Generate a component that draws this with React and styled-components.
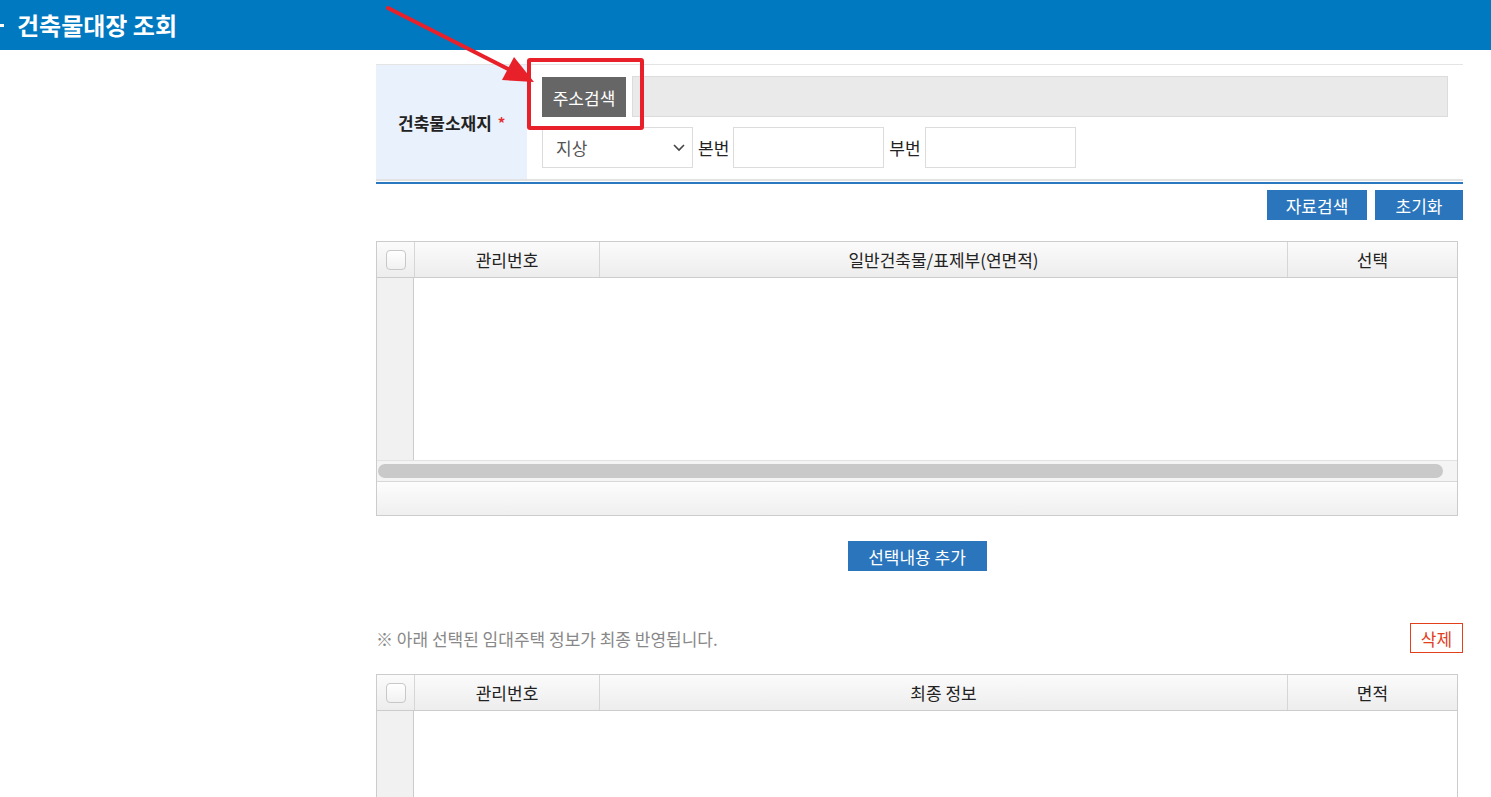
import React from "react";
import styled, { createGlobalStyle } from "styled-components";

const GlobalStyle = createGlobalStyle`
  body {
    margin: 0;
    background: #fff;
    font-family: "Noto Sans CJK KR", "Noto Sans", sans-serif;
    color: #333;
  }
  * { box-sizing: border-box; }
`;

const Page = styled.div`
  position: relative;
  width: 1491px;
  min-height: 797px;
  overflow: hidden;
`;

const TitleBar = styled.div`
  height: 50px;
  background: #0079c1;
  display: flex;
  align-items: center;
  color: #fff;
  font-size: 24px;
  font-weight: 700;
  line-height: 1;
`;

const Dash = styled.span`
  width: 4px;
  height: 3px;
  background: #fff;
  margin-right: 13px;
`;

const Content = styled.div`
  margin-left: 376px;
  width: 1087px;
`;

const FormTable = styled.div`
  margin-top: 14px;
  display: flex;
  border-top: 1px solid #e4e4e4;
  border-bottom: 2px solid #e2e2e2;
`;

const LabelCell = styled.div`
  width: 151px;
  background: #e9f1fc;
  display: flex;
  align-items: center;
  padding-left: 22px;
  font-size: 17px;
  font-weight: 700;
  color: #222;
`;

const Star = styled.span`
  color: #e53030;
  margin-left: 6px;
  font-size: 15px;
`;

const ValueCell = styled.div`
  flex: 1;
  padding: 11px 15px 11px 15px;
  display: flex;
  flex-direction: column;
  gap: 10px;
`;

const Row = styled.div`
  display: flex;
  align-items: center;
  height: ${(p) => p.$h}px;
`;

const DarkButton = styled.button`
  width: 84px;
  height: 40px;
  border: none;
  background: #666;
  color: #fff;
  font-family: inherit;
  font-size: 17px;
  line-height: 1;
  padding: 0;
  margin-top: 1px;
`;

const ReadonlyInput = styled.div`
  flex: 1;
  height: 41px;
  background: #eaeaea;
  border: 1px solid #dcdcdc;
  margin-left: 6px;
`;

const Select = styled.div`
  width: 151px;
  height: 41px;
  border: 1px solid #dcdcdc;
  background: #fff;
  display: flex;
  align-items: center;
  justify-content: space-between;
  padding: 0 6px 0 13px;
  font-size: 17px;
  color: #555;
`;

const FieldLabel = styled.span`
  font-size: 17px;
  color: #222;
  margin: 0 4px 0 5px;
`;

const TextInput = styled.div`
  width: 151px;
  height: 41px;
  border: 1px solid #dcdcdc;
  background: #fff;
`;

const BlueLine = styled.div`
  height: 2px;
  margin-top: 1px;
  background: #2a78c0;
`;

const ActionBar = styled.div`
  display: flex;
  justify-content: ${(p) => p.$align || "flex-end"};
  align-items: center;
  gap: 8px;
  width: ${(p) => p.$w || 1087}px;
  margin-top: ${(p) => p.$top || 0}px;
`;

const BlueButton = styled.button`
  width: ${(p) => p.$w}px;
  height: 30px;
  border: none;
  background: #2a75bc;
  color: #fff;
  font-family: inherit;
  font-size: 17px;
  line-height: 1;
  padding: 0;
`;

const Grid = styled.div`
  width: 1082px;
  margin-top: 21px;
  border: 1px solid #cccccc;
  height: ${(p) => p.$h}px;
  display: flex;
  flex-direction: column;
  background: #fff;
`;

const GridHead = styled.div`
  display: grid;
  grid-template-columns: 37px 185px 688px 170px;
  height: 36px;
  flex-shrink: 0;
  border-bottom: 1px solid #cccccc;
`;

const HeadCell = styled.div`
  display: flex;
  align-items: center;
  justify-content: center;
  font-size: 17px;
  color: #222;
  background: linear-gradient(#fbfbfb, #ededed);
  border-left: ${(p) => (p.$first ? "none" : "1px solid #d6d6d6")};
`;

const CheckBox = styled.span`
  width: 20px;
  height: 20px;
  border: 1px solid #c8c8c8;
  border-radius: 4px;
  background: linear-gradient(#ffffff, #f1f1f1);
`;

const GridBody = styled.div`
  display: flex;
  flex-shrink: 0;
  height: ${(p) => p.$h}px;
`;

const RowHeader = styled.div`
  width: 37px;
  background: #f1f1f1;
  border-right: 1px solid #cccccc;
`;

const ScrollTrack = styled.div`
  height: 21px;
  flex-shrink: 0;
  border-top: 1px solid #e2e2e2;
  background: #f4f4f4;
  padding: 3px 14px 2px 1px;
`;

const ScrollThumb = styled.div`
  height: 14px;
  border-radius: 7px;
  background: #c9c9c9;
`;

const GridFoot = styled.div`
  flex: 1;
  border-top: 1px solid #d8d8d8;
  background: linear-gradient(#fdfdfd, #efefef);
`;

const NoteRow = styled.div`
  display: flex;
  justify-content: space-between;
  align-items: center;
  height: 30px;
  margin-top: 52px;
`;

const Note = styled.span`
  font-size: 17px;
  color: #888;
`;

const DeleteButton = styled.button`
  width: 53px;
  height: 30px;
  border: 1px solid #e2401c;
  background: #fff;
  color: #e2401c;
  font-family: inherit;
  font-size: 17px;
  line-height: 1;
  padding: 0;
`;

const Highlight = styled.div`
  position: absolute;
  left: 527px;
  top: 58px;
  width: 117px;
  height: 72px;
  border: 4px solid #e8202a;
  border-radius: 3px;
  pointer-events: none;
`;

const ArrowLayer = styled.svg`
  position: absolute;
  left: 0;
  top: 0;
  pointer-events: none;
`;

const Chevron = () => (
  <svg width="14" height="10" viewBox="0 0 14 10">
    <polyline points="2,2 7,7 12,2" fill="none" stroke="#444" strokeWidth="1.6" />
  </svg>
);

const DataGrid = ({ cols, height, bodyHeight, withScroll }) => (
  <Grid $h={height}>
    <GridHead>
      <HeadCell $first>
        <CheckBox />
      </HeadCell>
      {cols.map((c) => (
        <HeadCell key={c}>{c}</HeadCell>
      ))}
    </GridHead>
    <GridBody $h={bodyHeight}>
      <RowHeader />
    </GridBody>
    {withScroll && (
      <>
        <ScrollTrack>
          <ScrollThumb />
        </ScrollTrack>
        <GridFoot />
      </>
    )}
  </Grid>
);

export default function App() {
  return (
    <Page>
      <GlobalStyle />
      <TitleBar>
        <Dash />
        건축물대장 조회
      </TitleBar>
      <Content>
        <FormTable>
          <LabelCell>
            건축물소재지<Star>*</Star>
          </LabelCell>
          <ValueCell>
            <Row $h={41}>
              <DarkButton>주소검색</DarkButton>
              <ReadonlyInput />
            </Row>
            <Row $h={41}>
              <Select>
                지상
                <Chevron />
              </Select>
              <FieldLabel>본번</FieldLabel>
              <TextInput />
              <FieldLabel>부번</FieldLabel>
              <TextInput />
            </Row>
          </ValueCell>
        </FormTable>
        <BlueLine />
        <ActionBar $top={6}>
          <BlueButton $w={100}>자료검색</BlueButton>
          <BlueButton $w={88}>초기화</BlueButton>
        </ActionBar>
        <DataGrid
          cols={["관리번호", "일반건축물/표제부(연면적)", "선택"]}
          height={275}
          bodyHeight={182}
          withScroll
        />
        <ActionBar $align="center" $top={25} $w={1082}>
          <BlueButton $w={139}>선택내용 추가</BlueButton>
        </ActionBar>
        <NoteRow>
          <Note>※ 아래 선택된 임대주택 정보가 최종 반영됩니다.</Note>
          <DeleteButton>삭제</DeleteButton>
        </NoteRow>
        <DataGrid cols={["관리번호", "최종 정보", "면적"]} height={200} bodyHeight={163} />
      </Content>
      <Highlight />
      <ArrowLayer width="560" height="100">
        <line x1="388" y1="8" x2="510" y2="70" stroke="#e8202a" strokeWidth="4" strokeLinecap="round" />
        <polygon points="534,82 502,80 514,57" fill="#e8202a" />
      </ArrowLayer>
    </Page>
  );
}
